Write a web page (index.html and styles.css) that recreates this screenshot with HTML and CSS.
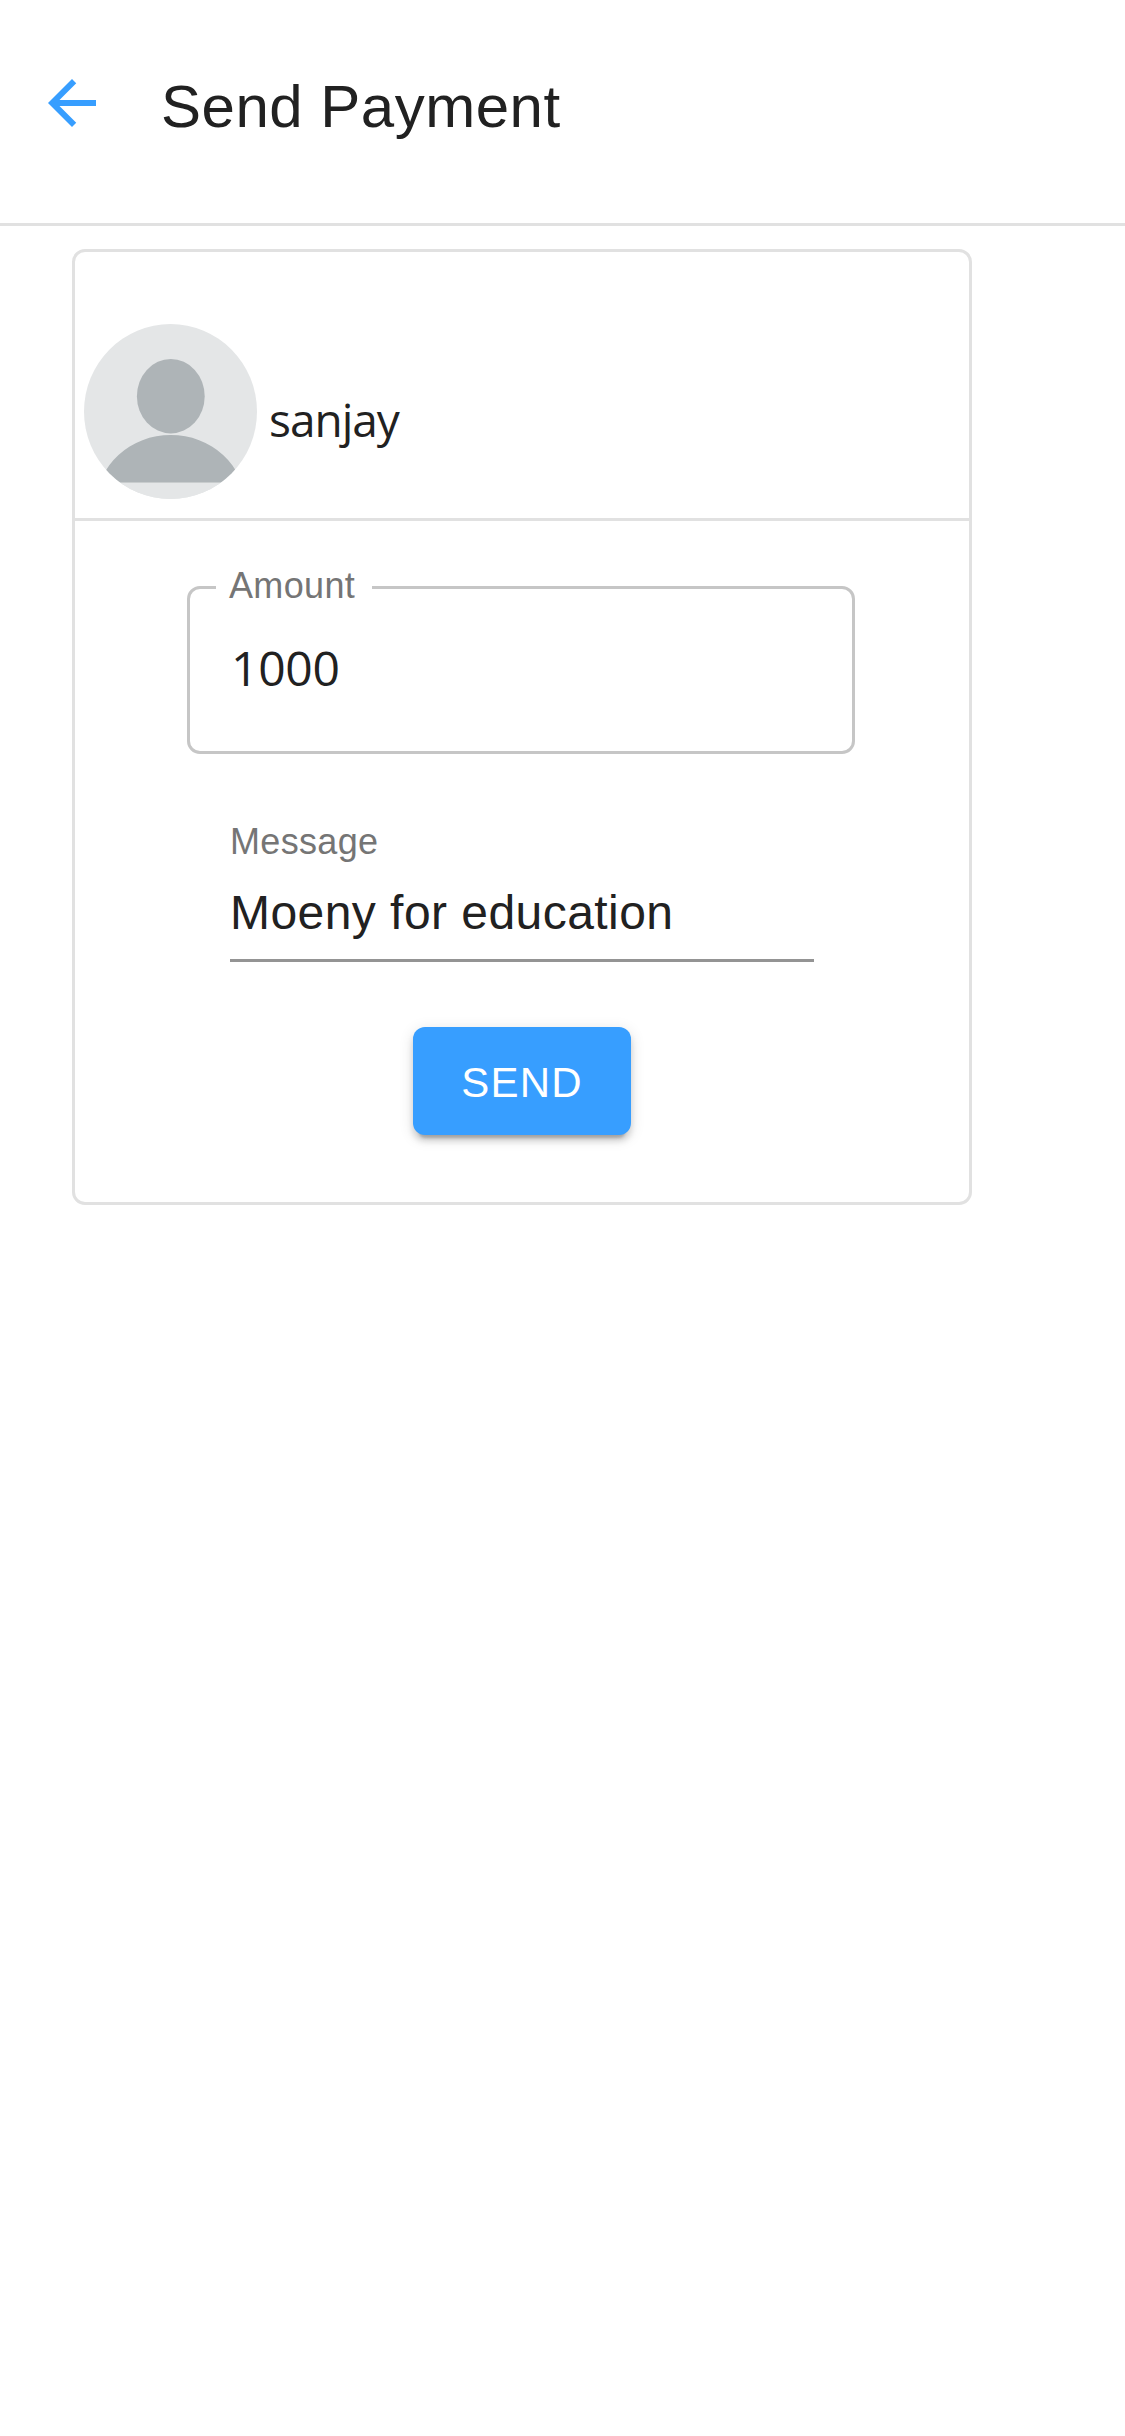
FILE: index.html
```html
<!DOCTYPE html>
<html lang="en">
<head>
<meta charset="utf-8">
<title>Send Payment</title>
<link rel="stylesheet" href="styles.css">
</head>
<body>
<header class="app-bar">
  <svg class="back" viewBox="0 0 24 24" aria-label="Back"><path d="M20 11H7.83l5.59-5.59L12 4l-8 8 8 8 1.41-1.41L7.83 13H20v-2z"/></svg>
  <h1 class="title">Send Payment</h1>
</header>
<main class="card">
  <section class="payee">
    <svg class="avatar" viewBox="0 0 173 175">
      <defs><clipPath id="disc"><ellipse cx="86.5" cy="87.5" rx="86.5" ry="87.5"/></clipPath></defs>
      <g clip-path="url(#disc)">
        <rect class="avatar-bg" width="173" height="175"/>
        <ellipse class="avatar-fg" cx="86.8" cy="72.2" rx="33.9" ry="37.2"/>
        <path class="avatar-fg" d="M12.8 179A74 68 0 0 1 160.8 179V158.7H12.8Z"/>
        <rect class="avatar-bg" y="158.7" width="173" height="17"/>
      </g>
    </svg>
    <span class="name">sanjay</span>
  </section>
  <form class="form">
    <fieldset class="outlined">
      <legend class="legend">Amount</legend>
      <div class="value amount">1000</div>
    </fieldset>
    <div class="message">
      <div class="label">Message</div>
      <div class="value">Moeny for education</div>
    </div>
    <button class="send" type="button">SEND</button>
  </form>
</main>
</body>
</html>
```
FILE: styles.css
```css
* { box-sizing: border-box; }
body {
  margin: 0;
  min-height: 2436px;
  background: #fff;
  color: #212121;
  font-family: "Liberation Sans", Arial, sans-serif;
}
.app-bar {
  display: flex;
  align-items: flex-start;
  height: 226px;
  padding: 67px 36px 0;
  border-bottom: 3px solid #e1e1e1;
}
.back { width: 72px; height: 72px; fill: #379eff; }
.title {
  margin: 0 0 0 53px;
  font-size: 60px;
  font-weight: 400;
  line-height: 80px;
  letter-spacing: 0.5px;
  white-space: nowrap;
}
.card {
  width: 900px;
  height: 956px;
  margin: 23px 0 0 72px;
  border: 3px solid #e1e1e1;
  border-radius: 13px;
}
.payee {
  display: flex;
  align-items: flex-start;
  height: 269px;
  padding: 72px 9px 0;
  border-bottom: 3px solid #e1e1e1;
}
.avatar { width: 173px; height: 175px; }
.avatar-bg { fill: #e4e6e7; }
.avatar-fg { fill: #aeb4b7; }
.name {
  margin: 62px 0 0 12px;
  font-family: "Open Sans", "Noto Sans", sans-serif;
  font-size: 46px;
  line-height: 66px;
  letter-spacing: -1px;
}
.form {
  display: flex;
  flex-direction: column;
  align-items: center;
  padding-top: 45px;
}
.outlined {
  width: 668px;
  height: 188px;
  margin: 0 2px 0 0;
  padding: 0 26px;
  border: 3px solid #c6c6c6;
  border-radius: 13px;
}
.legend {
  width: 156px;
  padding: 0 0 3px 13px;
  color: #757575;
  font-size: 36px;
  line-height: 39px;
  letter-spacing: 0.34px;
}
.value {
  font-size: 48px;
  line-height: 66px;
  letter-spacing: 0.45px;
}
.amount {
  padding: 27px 0 0 15px;
  font-family: "Open Sans", "Noto Sans", sans-serif;
  letter-spacing: -0.3px;
}
.message {
  width: 584px;
  height: 142px;
  margin-top: 66px;
  padding-top: 1px;
  border-bottom: 3px solid #949494;
}
.label {
  height: 59px;
  color: #757575;
  font-size: 36px;
  line-height: 42px;
  letter-spacing: 0.34px;
}
.send {
  width: 218px;
  height: 108px;
  margin-top: 65px;
  padding: 3px 0 0;
  border: 0;
  border-radius: 12px;
  background: #379eff;
  color: #fff;
  font: 42px/105px "Liberation Sans", Arial, sans-serif;
  letter-spacing: 1.2px;
  box-shadow: 0 9px 3px -6px rgba(0,0,0,.2), 0 6px 6px rgba(0,0,0,.14), 0 3px 15px rgba(0,0,0,.12);
}
```
